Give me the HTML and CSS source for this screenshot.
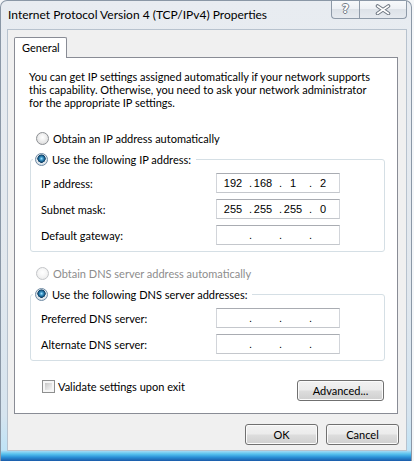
FILE: index.html
```html
<!DOCTYPE html>
<html>
<head>
<meta charset="utf-8">
<link rel="stylesheet" href="styles.css">
</head>
<body>
<div class="window">
  <div class="titlebar">
    <span class="title">Internet Protocol Version 4 (TCP/IPv4) Properties</span>
    <div class="caps">
      <div class="cap help">?</div>
      <div class="cap close">
        <svg width="16" height="11" viewBox="0 0 16 11">
          <path d="M2.5 2 L13.5 9.5 M13.5 2 L2.5 9.5" stroke="#6f7883" stroke-width="3.6" stroke-linecap="round"/>
          <path d="M2.5 2 L13.5 9.5 M13.5 2 L2.5 9.5" stroke="#ffffff" stroke-width="1.6" stroke-linecap="round"/>
        </svg>
      </div>
    </div>
  </div>
  <div class="client">
    <div class="tabs"><div class="tab">General</div></div>
    <div class="panel">
      <p class="intro">You can get IP settings assigned automatically if your network supports<br>this capability. Otherwise, you need to ask your network administrator<br>for the appropriate IP settings.</p>

      <div class="opt opt-first"><span class="radio"></span>Obtain an IP address automatically</div>
      <div class="group">
        <div class="legend"><span class="radio checked"></span>Use the following IP address:</div>
        <div class="grid">
          <span class="lbl">IP address:</span>
          <div class="ip"><span class="seg">192</span><span class="dot">.</span><span class="seg">168</span><span class="dot">.</span><span class="seg">1</span><span class="dot">.</span><span class="seg">2</span></div>
          <span class="lbl">Subnet mask:</span>
          <div class="ip"><span class="seg">255</span><span class="dot">.</span><span class="seg">255</span><span class="dot">.</span><span class="seg">255</span><span class="dot">.</span><span class="seg">0</span></div>
          <span class="lbl">Default gateway:</span>
          <div class="ip"><span class="seg"></span><span class="dot">.</span><span class="seg"></span><span class="dot">.</span><span class="seg"></span><span class="dot">.</span><span class="seg"></span></div>
        </div>
      </div>

      <div class="opt opt-dns disabled"><span class="radio"></span>Obtain DNS server address automatically</div>
      <div class="group">
        <div class="legend"><span class="radio checked"></span>Use the following DNS server addresses:</div>
        <div class="grid">
          <span class="lbl">Preferred DNS server:</span>
          <div class="ip"><span class="seg"></span><span class="dot">.</span><span class="seg"></span><span class="dot">.</span><span class="seg"></span><span class="dot">.</span><span class="seg"></span></div>
          <span class="lbl">Alternate DNS server:</span>
          <div class="ip"><span class="seg"></span><span class="dot">.</span><span class="seg"></span><span class="dot">.</span><span class="seg"></span><span class="dot">.</span><span class="seg"></span></div>
        </div>
      </div>

      <div class="bottom-row">
        <div class="check-row"><span class="checkbox"></span>Validate settings upon exit</div>
        <div class="btn btn-adv">Advanced...</div>
      </div>
    </div>
    <div class="dlg-buttons">
      <div class="btn">OK</div>
      <div class="btn">Cancel</div>
    </div>
  </div>
</div>
</body>
</html>
```

FILE: styles.css
```css
* { box-sizing: border-box; }
html, body { margin: 0; padding: 0; }
body {
  width: 414px;
  height: 461px;
  overflow: hidden;
  background: #f4f6f8;
  font-family: "Segoe UI", Lato, "Noto Sans", sans-serif;
  font-size: 11px;
  line-height: 13px;
  color: #000;
}
.window {
  width: 412px;
  height: 461px;
  padding: 0 4px 11px 6px;
  border: 1px solid #8a97a6;
  border-bottom: none;
  border-radius: 7px 7px 0 0;
  background: linear-gradient(to bottom, #e8ecf1 0%, #e2e8ee 60%, #d6e4ef 90%, #bfe3f6 97.6%, #56c1ee 98.5%, #2a8fd6 99.2%, #1a5aa8 100%);
  display: flex;
  flex-direction: column;
}
.titlebar {
  height: 28px;
  flex: none;
  display: flex;
  justify-content: space-between;
  align-items: flex-start;
}
.title {
  padding-left: 1px;
  font-size: 12px;
  line-height: 16px;
  margin-top: 6px;
  white-space: nowrap;
}
.caps { display: flex; }
.cap {
  height: 18px;
  border: 1px solid #8e9aa8;
  border-top: none;
  background: linear-gradient(to bottom, #f7f9fb 0%, #eef1f5 45%, #dde2e8 50%, #e6eaef 100%);
  display: flex;
  align-items: center;
  justify-content: center;
}
.help {
  width: 28px;
  border-right: none;
  border-radius: 0 0 0 4px;
  font-family: "DejaVu Sans", sans-serif;
  font-size: 12px;
  font-weight: bold;
  color: #fff;
  text-shadow: 1px 0 #737c86, -1px 0 #737c86, 0 1px #737c86, 0 -1px #737c86;
}
.close {
  width: 48px;
  border-radius: 0 0 4px 0;
}
.client {
  height: 422px;
  flex: none;
  background: #f0f0f0;
  border: 1px solid #b7c2ce;
  padding: 7px 8px 4px 6px;
  display: flex;
  flex-direction: column;
}
.tabs { display: flex; height: 20px; flex: none; }
.tab {
  position: relative;
  z-index: 1;
  width: 53px;
  height: 21px;
  background: #fff;
  border: 1px solid #898c95;
  border-bottom: none;
  border-radius: 2px 2px 0 0;
  padding: 3px 0 0 7px;
  line-height: 14px;
}
.panel {
  height: 357px;
  flex: none;
  background: #fff;
  border: 1px solid #898c95;
  padding: 12px 13px 12px 14px;
}
.intro {
  margin: 0;
  line-height: 13px;
  white-space: nowrap;
}
.opt {
  display: flex;
  align-items: center;
  height: 16px;
  padding-left: 7px;
}
.opt-first { margin-top: 21px; }
.opt-dns { margin-top: 13px; }
.disabled { color: #8d8d8d; }
.radio {
  width: 13px;
  height: 13px;
  flex: none;
  border-radius: 50%;
  border: 1px solid #8c8f93;
  margin-right: 4px;
  background: radial-gradient(circle at 50% 40%, #ffffff 0%, #f2f2f2 35%, #d4d4d4 100%);
}
.disabled .radio {
  border-color: #c3c5c8;
  background: radial-gradient(circle at 50% 40%, #ffffff 0%, #f7f7f7 40%, #e6e6e6 100%);
}
.radio.checked {
  border-color: #6e8aa3;
  background:
    radial-gradient(circle at 50% 42%, #a8e4ff 0, #3c97c9 1.6px, #16557f 3.2px, #0e3d63 3.9px, rgba(255,255,255,0) 4.4px),
    radial-gradient(circle at 50% 40%, #ffffff 0%, #eef2f5 40%, #c9d2da 100%);
}
.group {
  width: 355px;
  margin: 13px 0 0 1px;
  border: 1px solid #d5dfe5;
  border-radius: 3px;
  padding: 0 0 6px 10px;
}
.legend {
  display: flex;
  width: max-content;
  align-items: center;
  height: 16px;
  margin: -9px 0 0 -8px;
  padding: 0 5px 0 2px;
  background: #fff;
}
.grid {
  display: grid;
  grid-template-columns: 175px 124px;
  grid-auto-rows: 20px;
  row-gap: 6px;
  margin-top: 6px;
  align-items: center;
}
.ip {
  height: 20px;
  display: flex;
  align-items: center;
  padding-left: 5px;
  border: 1px solid #c4c7cc;
  border-top-color: #a9acb2;
  border-left-color: #d2d5da;
  border-right-color: #d2d5da;
  background: #fff;
  font-family: "Liberation Sans", Arial, sans-serif;
  font-size: 11px;
}
.seg {
  width: 27px;
  text-align: center;
  padding-right: 5px;
}
.dot { width: 3px; text-align: center; }
.bottom-row {
  margin-top: 19px;
  display: flex;
  justify-content: space-between;
  align-items: flex-start;
}
.check-row {
  display: flex;
  align-items: center;
  height: 13px;
  padding-left: 13px;
}
.checkbox {
  width: 13px;
  height: 13px;
  flex: none;
  margin-right: 3px;
  border: 1px solid #8e8f8f;
  padding: 2px;
  background: linear-gradient(135deg, #c6c6c6 0%, #e4e4e4 60%, #f5f5f5 100%) content-box, #f6f6f6;
}
.btn {
  width: 73px;
  height: 21px;
  border: 1px solid #707070;
  border-radius: 3px;
  background: linear-gradient(to bottom, #f2f2f2 0%, #ebebeb 49%, #dddddd 51%, #cfcfcf 100%);
  box-shadow: inset 0 0 0 1px #fbfbfb;
  display: flex;
  align-items: center;
  justify-content: center;
}
.btn-adv { width: 87px; }
.dlg-buttons {
  margin: 10px -1px 0 0;
  display: flex;
  justify-content: flex-end;
  gap: 8px;
}
```
